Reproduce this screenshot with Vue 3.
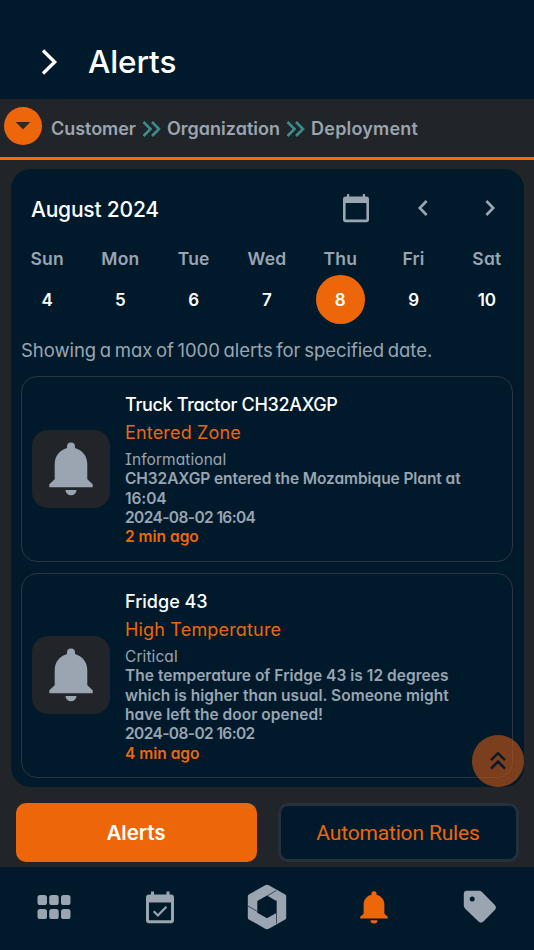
<script setup>
const days = [
  { name: 'Sun', date: 4 },
  { name: 'Mon', date: 5 },
  { name: 'Tue', date: 6 },
  { name: 'Wed', date: 7 },
  { name: 'Thu', date: 8, active: true },
  { name: 'Fri', date: 9 },
  { name: 'Sat', date: 10 },
]

const alerts = [
  {
    title: 'Truck Tractor CH32AXGP',
    type: 'Entered Zone',
    level: 'Informational',
    message: 'CH32AXGP entered the Mozambique Plant at 16:04',
    time: '2024-08-02 16:04',
    ago: '2 min ago',
  },
  {
    title: 'Fridge 43',
    type: 'High Temperature',
    level: 'Critical',
    message:
      'The temperature of Fridge 43 is 12 degrees which is higher than usual. Someone might have left the door opened!',
    time: '2024-08-02 16:02',
    ago: '4 min ago',
  },
]
</script>

<template>
  <div class="screen">
    <header class="header">
      <svg class="menu" width="18" height="28" viewBox="0 0 18 28">
        <path d="M3 2.500 L14.700 14 L3 25.500" fill="none" stroke="#fff" stroke-width="3.300" />
      </svg>
      <h1>Alerts</h1>
    </header>

    <nav class="crumbs">
      <button class="drop" aria-label="Expand">
        <svg width="16" height="10" viewBox="0 0 16 10"><path d="M.8 1h14.400L8 8.600z" fill="#33261f" /></svg>
      </button>
      <span class="c1">Customer</span>
      <svg class="sep" width="20" height="18" viewBox="0 0 20 18">
        <path d="M1.500 2l7 7-7 7M10 2l7 7-7 7" />
      </svg>
      <span class="c2">Organization</span>
      <svg class="sep" width="20" height="18" viewBox="0 0 20 18">
        <path d="M1.500 2l7 7-7 7M10 2l7 7-7 7" />
      </svg>
      <span class="c3">Deployment</span>
    </nav>

    <main class="panel">
      <div class="month">
        <h2>August 2024</h2>
        <svg width="28" height="30" viewBox="0 0 28 30">
          <path
            fill="#9aa5b1"
            fill-rule="evenodd"
            d="M5 1h2.200v2.600h13.600V1H23v2.600h1.400A2.600 2.600 0 0 1 27 6.200v20.400a2.600 2.600 0 0 1-2.600 2.600H3.600A2.600 2.600 0 0 1 1 26.600V6.200a2.600 2.600 0 0 1 2.600-2.600H5zM3.600 10v16.600h20.800V10z"
          />
        </svg>
        <svg class="prev" width="12" height="18" viewBox="0 0 12 18"><path d="M9.600 2L2.800 9l6.800 7" /></svg>
        <svg class="next" width="12" height="18" viewBox="0 0 12 18"><path d="M2.400 2l6.800 7-6.800 7" /></svg>
      </div>

      <div class="week">
        <div v-for="day in days" :key="day.name" class="day">
          <span class="name">{{ day.name }}</span>
          <span class="date" :class="{ active: day.active }">{{ day.date }}</span>
        </div>
      </div>

      <p class="hint">Showing a max of 1000 alerts for specified date.</p>

      <div class="list">
        <article v-for="alert in alerts" :key="alert.title" class="alert">
          <div class="thumb">
            <svg width="44" height="54" viewBox="0 0 44 54">
              <path
                fill="#9aa5b1"
                d="M22 .5a4 4 0 0 1 4 4v1.600C33 8 38.300 14 38.300 22v15.200l5.400 5v3H.3v-3l5.400-5V22C5.700 14 11 8 18 6.100V4.500a4 4 0 0 1 4-4zM16.500 48h11a5.500 5.200 0 0 1-11 0z"
              />
            </svg>
          </div>
          <div class="body">
            <h3>{{ alert.title }}</h3>
            <div class="type">{{ alert.type }}</div>
            <div class="level">{{ alert.level }}</div>
            <p>{{ alert.message }}</p>
            <div class="time">{{ alert.time }}</div>
            <div class="ago">{{ alert.ago }}</div>
          </div>
        </article>
      </div>

      <button class="top" aria-label="Scroll to top">
        <svg width="18" height="20" viewBox="0 0 18 20">
          <path d="M2 9.200l7-7 7 7M2 17.600l7-7 7 7" fill="none" stroke="#07192a" stroke-width="2.500" />
        </svg>
      </button>
    </main>

    <div class="tabs">
      <button class="tab primary">Alerts</button>
      <button class="tab outline">Automation Rules</button>
    </div>

    <footer class="bottom">
      <div class="item">
        <svg class="grid" width="34" height="24" viewBox="0 0 34 24" fill="#9aa5b1">
          <rect x=".500" y="0" width="9.500" height="10" rx="2.600" />
          <rect x="12.200" y="0" width="9.500" height="10" rx="2.600" />
          <rect x="24" y="0" width="9.500" height="10" rx="2.600" />
          <rect x=".500" y="14" width="9.500" height="10" rx="2.600" />
          <rect x="12.200" y="14" width="9.500" height="10" rx="2.600" />
          <rect x="24" y="14" width="9.500" height="10" rx="2.600" />
        </svg>
      </div>
      <div class="item">
        <svg class="cal" width="30" height="33" viewBox="0 0 30 33">
          <path
            fill="#9aa5b1"
            fill-rule="evenodd"
            d="M6 .500h3v3h12.500v-3h3v3H26A3 3 0 0 1 29 6.500v22.700a3 3 0 0 1-3 3H4a3 3 0 0 1-3-3V6.500a3 3 0 0 1 3-3h2zM4 11.400v17.900h22V11.400z"
          />
          <path d="M8.700 20.300l4.200 4.200 8.500-8.700" fill="none" stroke="#9aa5b1" stroke-width="2.200" />
        </svg>
      </div>
      <div class="item">
        <svg width="40" height="46" viewBox="0 0 40 46">
          <path
            fill="#9aa5b1"
            fill-rule="evenodd"
            d="M18.200 1.300q1.800-.9 3.600 0L38.200 10.400q1 .6 1 1.700v21.600q0 1.100-1 1.700l-16.400 9.300q-1.800.9-3.600 0L1.800 35.400q-1-.6-1-1.700V12.100q0-1.100 1-1.700zM20 11.500l-9.700 5.600v11.600l9.700 5.600 9.300-5.300V17z"
          />
          <path d="M.8 22l9.700 5.500M29.300 6.500L20 12M29.500 16.500v23" fill="none" stroke="#2b4152" stroke-width=".9" />
        </svg>
      </div>
      <div class="item">
        <svg class="bell" width="28" height="33" viewBox="0 0 44 54" preserveAspectRatio="none">
          <path
            fill="#ed670a"
            d="M22 .5a4 4 0 0 1 4 4v1.600C33 8 38.300 14 38.300 22v15.200l5.400 5v3H.3v-3l5.400-5V22C5.700 14 11 8 18 6.100V4.500a4 4 0 0 1 4-4zM16.500 48h11a5.500 5.200 0 0 1-11 0z"
          />
        </svg>
      </div>
      <div class="item">
        <svg class="tag" width="34" height="34" viewBox="0 0 34 34">
          <path
            fill="#9aa5b1"
            fill-rule="evenodd"
            d="M4 .8h12q1.700 0 3 1.200L31.800 15q2.200 2.600 0 5L20.500 31.600q-2.600 2.200-5 0L2 18.500Q.8 17.200.8 15.500V4Q.8.800 4 .800zM9.200 6.600a2.500 2.500 0 1 0 0 5 2.500 2.500 0 0 0 0-5z"
          />
        </svg>
      </div>
    </footer>
  </div>
</template>

<style>
body {
  margin: 0;
  background: #212428;
}
</style>

<style scoped>
.screen {
  width: 534px;
  height: 950px;
  display: flex;
  flex-direction: column;
  overflow: hidden;
  background: #212428;
  color: #fff;
  font-family: Inter, 'Liberation Sans', sans-serif;
  font-feature-settings: 'cv11';
}
h1, h2, h3, p {
  margin: 0;
}
button {
  border: 0;
  padding: 0;
  font-family: inherit;
  font-feature-settings: inherit;
}
svg {
  display: block;
  flex: none;
}
.header {
  box-sizing: border-box;
  height: 98.500px;
  flex: none;
  display: flex;
  align-items: center;
  padding: 26px 0 0 40px;
  background: #001a2c;
}
.header h1 {
  margin-left: 30px;
  font-size: 31.500px;
  line-height: 40px;
  font-weight: 500;
  letter-spacing: -0.1px;
}
.crumbs {
  box-sizing: border-box;
  height: 61.500px;
  flex: none;
  display: flex;
  align-items: center;
  padding: 2px 0 0 4px;
  border-bottom: 3px solid #f96a05;
  color: #9aa5b1;
  font-size: 18px;
  font-weight: 600;
}
.crumbs span {
  line-height: 24px;
}
.crumbs .c1 {
  letter-spacing: -0.05px;
}
.crumbs .c2 {
  letter-spacing: 0.020px;
}
.crumbs .c3 {
  letter-spacing: 0.200px;
}
.drop {
  width: 38px;
  height: 38px;
  border-radius: 50%;
  background: #ed670a;
  display: flex;
  align-items: center;
  justify-content: center;
  margin: 0 9px 5px 0;
}
.sep {
  margin: 0 5px 0 6px;
}
.sep path {
  fill: none;
  stroke: #398d8d;
  stroke-width: 2.600;
}
.panel {
  position: relative;
  box-sizing: border-box;
  width: 513px;
  height: 618px;
  flex: none;
  margin: 9px 0 0 10.500px;
  border-radius: 20px;
  background: #001a2c;
}
.month {
  height: 78px;
  display: flex;
  align-items: center;
  padding: 0 28px 0 20.500px;
}
.month h2 {
  flex: 1;
  padding-top: 3px;
  font-size: 21px;
  font-weight: 500;
  line-height: 28px;
  letter-spacing: -0.2px;
}
.prev {
  margin-left: 47px;
}
.next {
  margin-left: 55px;
}
.prev path,
.next path {
  fill: none;
  stroke: #9aa5b1;
  stroke-width: 2.600;
}
.week {
  display: grid;
  grid-template-columns: repeat(7, 1fr);
}
.day {
  display: flex;
  flex-direction: column;
  align-items: center;
}
.name {
  height: 28px;
  line-height: 24px;
  font-size: 17.500px;
  font-weight: 600;
  letter-spacing: 0.2px;
  color: #9aa5b1;
}
.date {
  box-sizing: border-box;
  width: 49px;
  height: 49px;
  padding-top: 1px;
  line-height: 48px;
  border-radius: 50%;
  text-align: center;
  font-size: 17px;
  font-weight: 600;
}
.date.active {
  background: #ed670a;
}
.hint {
  padding: 13px 0 0 10.500px;
  height: 39px;
  line-height: 26px;
  font-size: 18.500px;
  letter-spacing: -0.045px;
  word-spacing: -1.500px;
  color: #9aa5b1;
}
.list {
  display: flex;
  flex-direction: column;
  gap: 11px;
  padding: 0 10.500px;
}
.alert {
  box-sizing: border-box;
  display: flex;
  align-items: center;
  border: 1px solid #2c353f;
  border-radius: 16px;
  padding: 14px 22px 14.600px 10px;
}
.thumb {
  flex: none;
  width: 78px;
  height: 78px;
  border-radius: 16px;
  background: #212428;
  display: flex;
  align-items: center;
  justify-content: center;
  margin-right: 15px;
}
.body {
  flex: 1;
  color: #9aa5b1;
  font-size: 15.500px;
  line-height: 19.300px;
  font-weight: 600;
}
.body p {
  padding-right: 16px;
  letter-spacing: -0.080px;
}
.body h3,
.type {
  font-size: 18px;
  line-height: 28.400px;
  font-weight: 500;
  color: #fff;
}
.alert:first-child h3 {
  letter-spacing: -0.330px;
}
.body .type {
  color: #ed670a;
  font-weight: 400;
  letter-spacing: 0.170px;
}
.body .level {
  margin-top: 2.200px;
  font-weight: 400;
  letter-spacing: 0.080px;
  font-feature-settings: 'cv11', 'cv08';
}
.alert:last-child p {
  letter-spacing: 0.030px;
}
.time {
  letter-spacing: -0.600px;
}
.ago {
  color: #ed670a;
}
.top {
  position: absolute;
  right: 0;
  bottom: 0;
  width: 52px;
  height: 52px;
  border-radius: 50%;
  background: rgba(192, 84, 22, 0.640);
  display: flex;
  align-items: center;
  justify-content: center;
}
.tabs {
  flex: none;
  display: grid;
  grid-template-columns: 1fr 1fr;
  gap: 21px;
  padding: 16px 15.500px 0;
  height: 64px;
}
.tab {
  box-sizing: border-box;
  height: 59px;
  border-radius: 10px;
  font-size: 20.500px;
}
.primary {
  background: #ed670a;
  color: #fff;
  font-weight: 600;
}
.outline {
  background: #001a2c;
  border: 3px solid #26303b;
  color: #ed670a;
  font-family: Roboto, sans-serif;
  font-feature-settings: normal;
  font-size: 21px;
  letter-spacing: -0.170px;
}
.bottom {
  height: 83px;
  flex: none;
  display: grid;
  grid-template-columns: repeat(5, 1fr);
  align-items: center;
  justify-items: center;
  background: #001a2c;
  padding-bottom: 3px;
  box-sizing: border-box;
}
.grid {
  margin-left: 1px;
}
.tag {
  margin-right: 1px;
}
</style>
